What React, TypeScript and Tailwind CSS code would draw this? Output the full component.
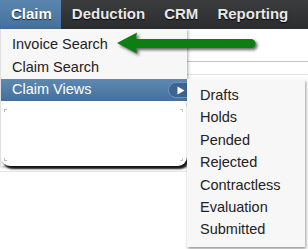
const navItems = ["Deduction", "CRM", "Reporting"];

const menuItems = ["Invoice Search", "Claim Search"];

const subItems = [
  "Drafts",
  "Holds",
  "Pended",
  "Rejected",
  "Contractless",
  "Evaluation",
  "Submitted",
];

export default function App() {
  return (
    <div className="relative h-[249px] w-[308px] overflow-hidden bg-white font-['Liberation_Sans',Arial,sans-serif]">
      {/* top nav */}
      <nav className="flex h-[29px] bg-gradient-to-b from-[#3c3d3f] to-[#2b2c2e] text-[15px] font-bold">
        <div className="flex items-center bg-gradient-to-b from-[#5a86ae] to-[#44709b] pl-[11px] pr-[9px] text-white [text-shadow:0_1px_1px_rgba(0,0,0,0.7)]">
          Claim
        </div>
        <div className="flex items-center gap-[19px] pl-[11px] text-[#e8e8e8] [text-shadow:0_1px_1px_rgba(0,0,0,0.9)]">
          {navItems.map((item) => (
            <span key={item}>{item}</span>
          ))}
        </div>
      </nav>

      {/* page content behind the menu */}
      <div className="flex flex-col">
        <div className="h-[33px] border-b border-[#c4c4c4]" />
        <div className="h-[13px] border-b border-[#e2e2e2]" />
        <div className="h-[97px] w-[187px] border-b border-[#e4e4e4]" />
      </div>

      {/* dropdown */}
      <div className="absolute left-0 top-[29px] w-[187px] border-l border-[#e0e0e0] bg-[#f7f7f7] pt-[4px] text-[14.5px] text-[#222] shadow-[1px_1px_3px_rgba(0,0,0,0.35)]">
        {menuItems.map((item) => (
          <div key={item} className="flex h-[23px] items-center pl-[11px]">
            {item}
          </div>
        ))}
        <div className="relative flex h-[22px] items-center bg-gradient-to-b from-[#5d89b1] to-[#43709b] pl-[11px] text-white">
          Claim Views
          <span className="absolute left-[167px] top-[3px] flex h-[16px] w-[28px] items-center rounded-full border border-[#6f95bb] bg-[#3b6590] pl-[8px]">
            <svg width="8" height="9" viewBox="0 0 8 9">
              <path d="M0.5 0.5 L7.5 4.5 L0.5 8.5 Z" fill="#fff" />
            </svg>
          </span>
        </div>
        <div className="relative h-[65px] w-[186px] rounded-b-[9px] rounded-tr-[6px] bg-white shadow-[2px_3px_2px_rgba(0,0,0,0.9)]">
          <span className="absolute left-[3px] top-[8px] h-[3px] w-[3px] border-l border-t border-[#bbb]" />
          <span className="absolute right-[4px] top-[8px] h-[3px] w-[3px] border-r border-t border-[#ccc]" />
          <span className="absolute bottom-[5px] left-[3px] h-[3px] w-[3px] border-b border-l border-[#bbb]" />
          <span className="absolute bottom-[5px] right-[4px] h-[3px] w-[3px] border-b border-r border-[#ccc]" />
        </div>
      </div>

      {/* submenu */}
      <div className="absolute left-[187px] top-[79px] h-[168px] w-[118px] bg-[#f7f7f7] pl-[13px] pt-[5px] text-[14.5px] leading-[22.4px] text-[#222] shadow-[1px_2px_3px_rgba(0,0,0,0.4)]">
        {subItems.map((item) => (
          <div key={item}>{item}</div>
        ))}
      </div>

      {/* green annotation arrow */}
      <svg
        className="absolute left-[110px] top-[28px] drop-shadow-[2px_2px_1.5px_rgba(0,0,0,0.6)]"
        width="155"
        height="32"
        viewBox="110 28 155 32"
      >
        <path
          d="M117 43 L137 32.5 L136 39 L251 39 A4.5 4.5 0 0 1 251 48 L136 48 L137 53.5 Z"
          fill="#0d7e12"
        />
      </svg>
    </div>
  );
}
